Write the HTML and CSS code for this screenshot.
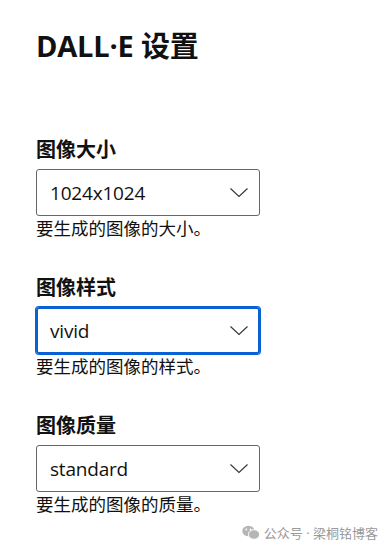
FILE: index.html
```html
<!DOCTYPE html>
<html lang="zh">
<head>
<meta charset="utf-8">
<link rel="stylesheet" href="styles.css">
</head>
<body>
<div class="page">
  <h1 class="title">DALL·E 设置</h1>
  <div class="field first">
    <div class="label">图像大小</div>
    <div class="select"><span>1024x1024</span><svg class="chev" width="20" height="11" viewBox="0 0 20 11"><path d="M1.5 1.5 L10 9.5 L18.5 1.5" fill="none" stroke="#333" stroke-width="1.1"/></svg></div>
    <div class="help">要生成的图像的大小。</div>
  </div>
  <div class="field">
    <div class="label">图像样式</div>
    <div class="select focus"><span>vivid</span><svg class="chev" width="20" height="11" viewBox="0 0 20 11"><path d="M1.5 1.5 L10 9.5 L18.5 1.5" fill="none" stroke="#333" stroke-width="1.1"/></svg></div>
    <div class="help">要生成的图像的样式。</div>
  </div>
  <div class="field">
    <div class="label">图像质量</div>
    <div class="select"><span>standard</span><svg class="chev" width="20" height="11" viewBox="0 0 20 11"><path d="M1.5 1.5 L10 9.5 L18.5 1.5" fill="none" stroke="#333" stroke-width="1.1"/></svg></div>
    <div class="help">要生成的图像的质量。</div>
  </div>
  <div class="watermark">
    <svg width="18" height="15" viewBox="0 0 18 15"><ellipse cx="6.5" cy="6" rx="6.2" ry="5.3" fill="#b5b5b5"/><ellipse cx="12" cy="9.5" rx="5.6" ry="4.8" fill="#b5b5b5" stroke="#fff" stroke-width="1"/><circle cx="4.3" cy="4.5" r="0.9" fill="#fff"/><circle cx="8.5" cy="4.5" r="0.9" fill="#fff"/></svg>
    <span>公众号 · 梁桐铭博客</span>
  </div>
</div>
</body>
</html>
```
FILE: styles.css
```css
html, body {
  margin: 0;
  padding: 0;
  background: #fff;
}
body {
  font-family: "Open Sans", "Noto Sans CJK SC", sans-serif;
  color: #111;
}
.page {
  width: 392px;
  height: 548px;
  padding: 0 0 0 36px;
  box-sizing: border-box;
  position: relative;
}
.title {
  margin: 0;
  padding-top: 27px;
  font-size: 29px;
  line-height: 38px;
  font-weight: 700;
  letter-spacing: -0.2px;
}
.field {
  margin-top: 34px;
}
.field.first {
  margin-top: 71px;
}
.label {
  font-size: 20px;
  font-weight: 700;
  line-height: 28px;
  margin-bottom: 5px;
}
.select {
  width: 224px;
  height: 47px;
  box-sizing: border-box;
  border: 1px solid #666;
  border-radius: 3px;
  display: flex;
  align-items: center;
  justify-content: space-between;
  padding: 0 10px 0 13px;
  font-size: 19px;
  letter-spacing: -0.2px;
}
.select.focus {
  border: 2px solid #0862d6;
  box-shadow: 0 0 0 1px #0862d6;
  padding: 0 9px 0 12px;
}
.chev {
  display: block;
}
.help {
  font-size: 17.5px;
  line-height: 24px;
  color: #111;
}
.watermark {
  position: absolute;
  right: 14px;
  bottom: 6px;
  display: flex;
  align-items: center;
  gap: 4px;
  font-size: 13px;
  color: #9a9a9a;
}
```
